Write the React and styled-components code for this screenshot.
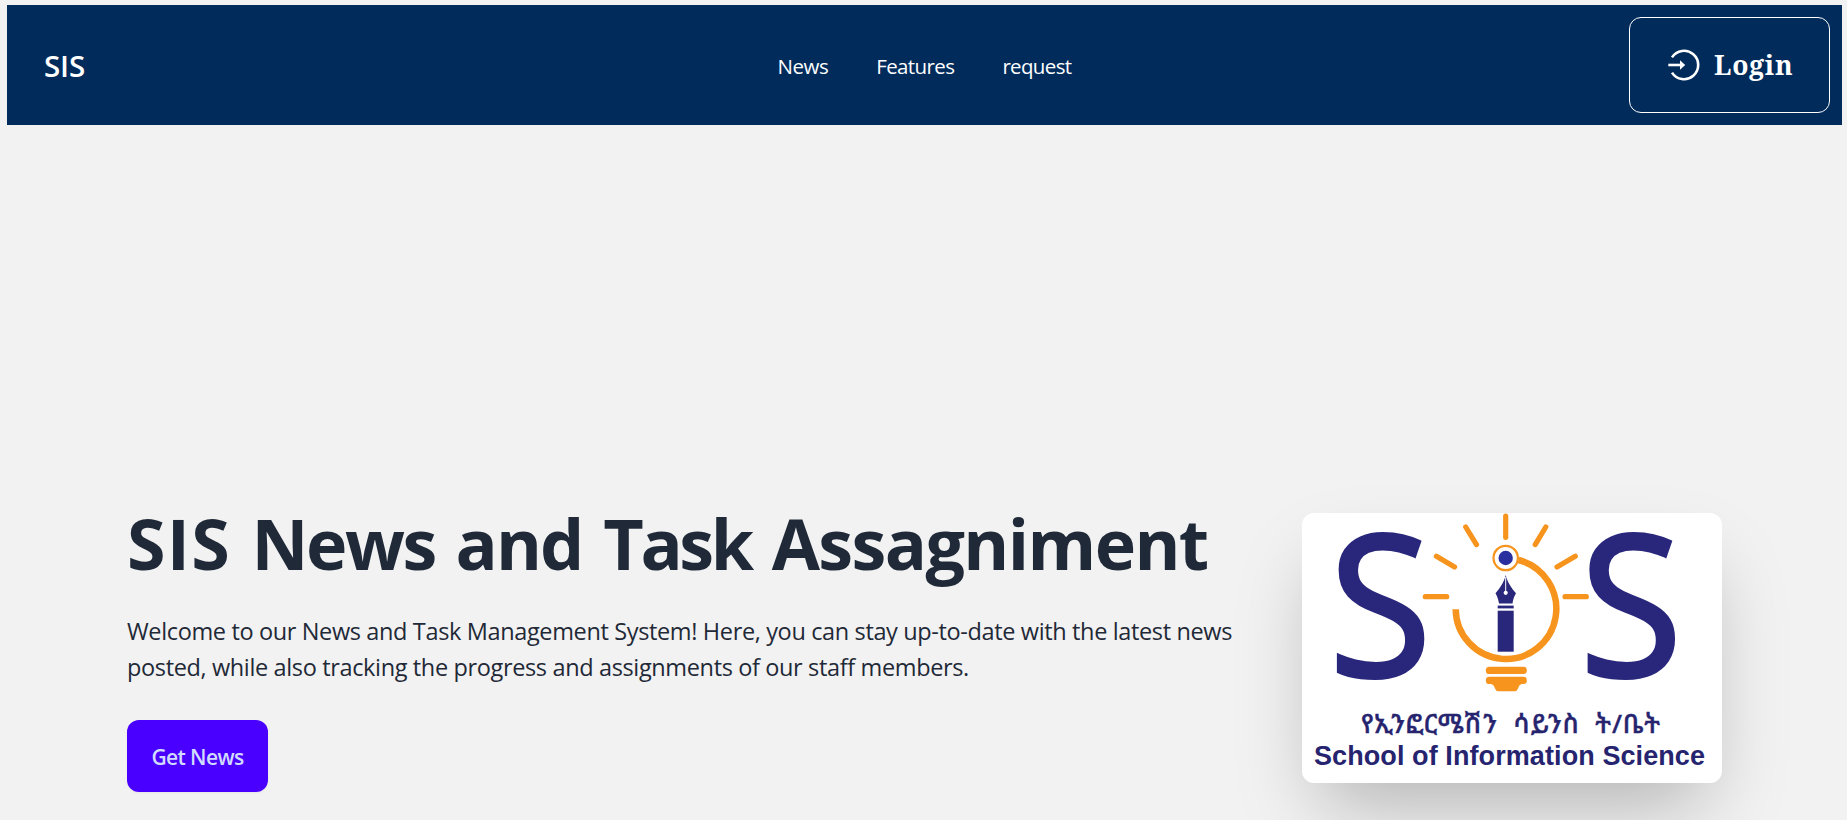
import React from "react";
import styled, { createGlobalStyle } from "styled-components";

const GlobalStyle = createGlobalStyle`
  *, *::before, *::after { box-sizing: border-box; }
  html, body { margin: 0; padding: 0; }
  body {
    background: #f2f2f2;
    color: #1f2937;
    font-family: "Open Sans", "Noto Sans", sans-serif;
    overflow: hidden;
  }
  h1, p { margin: 0; }
`;

const Page = styled.div`
  min-height: 820px;
  padding: 5px 5px 0 7px;
`;

const Navbar = styled.header`
  display: grid;
  grid-template-columns: 1fr auto 1fr;
  align-items: center;
  height: 120px;
  padding: 0 12px;
  background: #002b5b;
  color: #fff;
`;

const Brand = styled.a`
  justify-self: start;
  padding-left: 25px;
  font-size: 29.5px;
  line-height: 42px;
  font-weight: 650;
  letter-spacing: -0.1px;
  padding-top: 1px;
`;

const Links = styled.nav`
  display: flex;
  gap: 48px;
  padding-top: 1px;
`;

const NavLink = styled.a`
  font-size: 20.5px;
  line-height: 30px;
  letter-spacing: ${(p) => p.$track}px;
`;

const LoginButton = styled.button`
  justify-self: end;
  display: flex;
  align-items: center;
  gap: 14px;
  width: 201px;
  height: 96px;
  padding: 0 0 0 38px;
  border: 1px solid #fff;
  border-radius: 12px;
  background: transparent;
  color: #fff;
  font-family: "Noto Serif", "Liberation Serif", serif;
  font-size: 26.5px;
  font-weight: 700;
  letter-spacing: 0.8px;
`;

const Hero = styled.main`
  display: flex;
  align-items: center;
  justify-content: space-between;
  padding: 379px 120px 0;
`;

const Copy = styled.section`
  width: 1127px;
`;

const Title = styled.h1`
  padding-top: 3px;
  font-size: 70px;
  line-height: 72px;
  font-weight: 700;
  letter-spacing: -1.13px;
  word-spacing: 3.6px;
  white-space: nowrap;
`;

const Word = styled.span`
  letter-spacing: ${(p) => p.$track}px;
`;

const Lead = styled.p`
  padding: 34px 0 35px;
  font-size: 23.5px;
  line-height: 36px;
  letter-spacing: -0.36px;
`;

const PrimaryButton = styled.button`
  display: flex;
  align-items: center;
  justify-content: center;
  width: 141px;
  height: 72px;
  padding: 2px 0 0;
  border: 0;
  border-radius: 12px;
  background: #4a00ff;
  color: #d1dbff;
  font-family: inherit;
  font-size: 21px;
  font-weight: 600;
  letter-spacing: -0.6px;
  box-shadow: 0 1px 2px rgba(0, 0, 0, 0.05);
`;

const LogoCard = styled.figure`
  margin: 0;
  width: 420px;
  height: 270px;
  border-radius: 12px;
  background: #fff;
  overflow: hidden;
  box-shadow: 0 38px 75px -18px rgba(0, 0, 0, 0.27);
`;

const LogoSvg = styled.svg`
  display: block;
`;

const LoginIcon = () => (
  <svg width="32" height="32" viewBox="0 0 32 32" fill="none" stroke="#fff" strokeWidth="2.6">
    <path d="M4 8.4A14.2 14.2 0 1 1 4 23.6" />
    <path d="M0.3 16H13" />
    <path d="M12 11.2L17.2 16L12 20.8Z" fill="#fff" stroke="none" />
  </svg>
);

const RAYS = [
  [203.7, 3, 203.7, 24.3],
  [163.7, 14, 174.5, 31.6],
  [243.8, 14, 233.2, 31.6],
  [134.4, 43.3, 152.6, 54],
  [273.3, 43.3, 255, 54],
  [123.3, 83.7, 144.7, 83.7],
  [263, 83.7, 284.3, 83.7],
];

const SchoolLogo = () => (
  <LogoSvg width="420" height="270" viewBox="0 0 420 270">
    <g
      fill="#29277b"
      stroke="#29277b"
      strokeWidth="4"
      fontFamily="'Open Sans', sans-serif"
      fontSize="196"
    >
      <text transform="translate(27.3 163.4) scale(0.95 1)">S</text>
      <text transform="translate(277.9 163.4) scale(0.95 1)">S</text>
    </g>
    <g stroke="#f7941d" fill="none">
      <path d="M153.7 96.2A50.3 50.3 0 1 0 216.5 47" strokeWidth="6.5" />
      <g strokeWidth="5.2" strokeLinecap="round">
        {RAYS.map(([x1, y1, x2, y2]) => (
          <line key={`${x1}-${y1}`} x1={x1} y1={y1} x2={x2} y2={y2} />
        ))}
      </g>
      <circle cx="203.7" cy="45" r="12.2" fill="#fff" strokeWidth="2.2" />
    </g>
    <circle cx="203.7" cy="45" r="7.2" fill="#2a2fa0" />
    <g fill="#29277b">
      <path d="M203.7 62C205.2 69 209.5 75 214 80.3C212 83.5 211 87 210.5 90.6H197C196.4 87 195.4 83.5 193.5 80.3C198 75 202.2 69 203.7 62Z" />
      <rect x="195.7" y="92.6" width="16" height="2.8" />
      <rect x="195.7" y="97.7" width="16" height="41" />
    </g>
    <path d="M203.7 64V79" stroke="#fff" strokeWidth="1" />
    <circle cx="203.7" cy="79.8" r="2.1" fill="#fff" />
    <g fill="#f7941d">
      <rect x="183.8" y="153.8" width="41" height="7.2" rx="3.6" />
      <path d="M187.4 163.8H221.2A3.6 3.6 0 0 1 221.2 171C218 171.2 217.5 172 216 175.5Q215 178.3 212.5 178.3H196.5Q194 178.3 193 175.5C191.5 172 191 171.2 187.4 171A3.6 3.6 0 0 1 187.4 163.8Z" />
    </g>
    <g fill="#26246f">
      <text
        x="59"
        y="219.6"
        fontFamily="'Noto Sans Ethiopic', 'Abyssinica SIL', 'FreeSerif', sans-serif"
        fontSize="26"
        fontWeight="500"
        stroke="#26246f"
        strokeWidth="0.4"
        wordSpacing="8"
        textLength="299"
      >
        የኢንፎርሜሽን ሳይንስ ት/ቤት
      </text>
      <text
        x="12"
        y="251.6"
        fontFamily="'Liberation Sans', Arial, sans-serif"
        fontSize="27"
        fontWeight="700"
        textLength="391"
      >
        School of Information Science
      </text>
    </g>
  </LogoSvg>
);

export default function App() {
  return (
    <>
      <GlobalStyle />
      <Page>
        <Navbar>
          <Brand>SIS</Brand>
          <Links>
            <NavLink $track={-0.5}>News</NavLink>
            <NavLink $track={-0.6}>Features</NavLink>
            <NavLink $track={-0.65}>request</NavLink>
          </Links>
          <LoginButton>
            <LoginIcon />
            Login
          </LoginButton>
        </Navbar>
        <Hero>
          <Copy>
            <Title>
              <Word $track={1.2}>SIS</Word> <Word $track={-2.4}>News</Word> <Word $track={-1.9}>and</Word>{" "}
              <Word $track={-3.3}>Task</Word> <Word $track={-1.6}>Assagniment</Word>
            </Title>
            <Lead>
              Welcome to our News and Task Management System! Here, you can stay up-to-date with the latest news
              posted, while also tracking the progress and assignments of our staff members.
            </Lead>
            <PrimaryButton>Get News</PrimaryButton>
          </Copy>
          <LogoCard>
            <SchoolLogo />
          </LogoCard>
        </Hero>
      </Page>
    </>
  );
}
